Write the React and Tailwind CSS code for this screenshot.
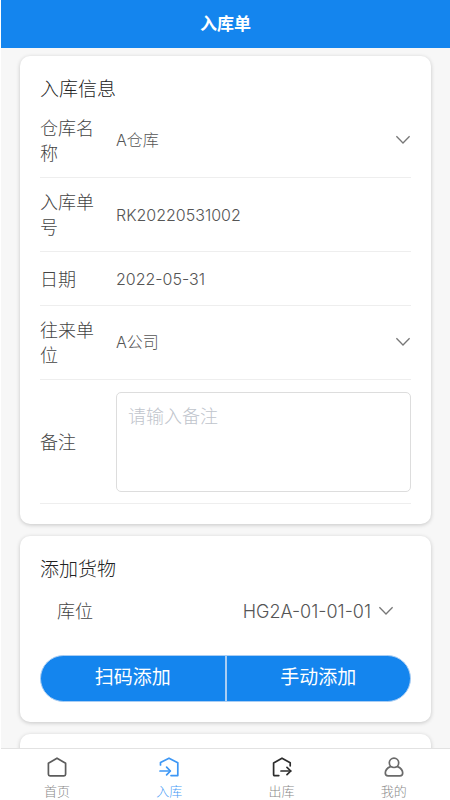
import { useState } from 'react';

const TABS = [
  { id: 'home', label: '首页', color: 'text-[#8a8a8a]', iconColor: 'text-[#5c5c5c]' },
  { id: 'in', label: '入库', color: 'text-[#4a9df5]', iconColor: 'text-[#3d97f5]' },
  { id: 'out', label: '出库', color: 'text-[#8a8a8a]', iconColor: 'text-[#2c2c2c]' },
  { id: 'me', label: '我的', color: 'text-[#8a8a8a]', iconColor: 'text-[#6a6a6a]' },
];

const TAB_PATHS = {
  home: ['M10 1.2 18.6 6.2V17.2Q18.6 18.8 17 18.8H3Q1.4 18.8 1.4 17.2V6.2Z'],
  in: ['M1.5 8V5.6L10 1.2 18.8 5.8V18.6H12', 'M1 14H11', 'M7.6 10.2 11.4 14 7.6 17.8'],
  out: ['M6.8 18.6H2.6Q1.6 18.6 1.6 17.6V6L10 1.2 18.2 5.8V8.8', 'M9 14H18.6', 'M15 10.4 18.8 14 15 17.6'],
  me: [
    'M10 1.1A4.7 4.7 0 1 1 10 10.5A4.7 4.7 0 1 1 10 1.1Z',
    'M6.5 9.6C3.4 10.9 1.3 13.4 1.3 16Q1.3 18.8 4.1 18.8H15.9Q18.7 18.8 18.7 16C18.7 13.4 16.6 10.9 13.5 9.6',
  ],
};

function TabIcon({ id, className }) {
  return (
    <svg
      viewBox="0 0 20 20"
      className={`size-5 ${className}`}
      fill="none"
      stroke="currentColor"
      strokeWidth="1.7"
      strokeLinecap="round"
      strokeLinejoin="round"
      aria-hidden="true"
    >
      {TAB_PATHS[id].map((d) => (
        <path key={d} d={d} />
      ))}
    </svg>
  );
}

function Chevron() {
  return (
    <svg
      viewBox="0 0 16 12"
      className="pointer-events-none h-3 w-4 shrink-0 text-[#777]"
      fill="none"
      stroke="currentColor"
      strokeWidth="1.3"
      aria-hidden="true"
    >
      <path d="M1.4 1.2 8 8 14.6 1.2" />
    </svg>
  );
}

function Card({ title, children }) {
  return (
    <section className="rounded-[10px] bg-white p-5 shadow-[0_1px_4px_rgba(0,0,0,0.2)]">
      {title ? <h2 className="h-7 text-[19px] leading-7 text-[#222]">{title}</h2> : null}
      {children}
    </section>
  );
}

function Row({ id, label, children }) {
  return (
    <div className="flex min-h-[54px] items-center border-b border-[#eee] pt-3 pb-[11px]">
      <label htmlFor={id} className="w-[76px] shrink-0 pr-4 text-[18px] leading-[25px] text-[#444]">
        {label}
      </label>
      <div className="flex min-w-0 flex-1 items-center">{children}</div>
    </div>
  );
}

const FIELD = 'h-6 min-w-0 flex-1 appearance-none bg-transparent text-[16px] leading-6 text-[#555] outline-none';
const SELECT = 'h-6 min-w-0 flex-1 appearance-none bg-transparent pb-0.5 text-[16px] leading-5 text-[#555] outline-none';

export default function App() {
  const [tab, setTab] = useState('in');

  return (
    <div className="flex h-screen flex-col bg-white pl-px font-[Inter,'Noto_Sans_CJK_SC',sans-serif] font-light">
      <header className="flex h-12 shrink-0 items-center justify-center bg-[#1485ee] pt-0.5">
        <h1 className="text-[17px] font-bold text-white">入库单</h1>
      </header>

      <main className="flex min-h-0 flex-1 flex-col gap-3 overflow-y-auto bg-[#f7f7f7] px-[19px] pt-2 [scrollbar-width:none]">
        <Card title="入库信息">
          <Row id="warehouse" label="仓库名称">
            <select id="warehouse" className={SELECT}>
              <option>A仓库</option>
            </select>
            <Chevron />
          </Row>
          <Row id="order-no" label="入库单号">
            <input id="order-no" className={FIELD} defaultValue="RK20220531002" />
          </Row>
          <Row id="date" label="日期">
            <input id="date" className={FIELD} defaultValue="2022-05-31" />
          </Row>
          <Row id="partner" label="往来单位">
            <select id="partner" className={SELECT}>
              <option>A公司</option>
            </select>
            <Chevron />
          </Row>
          <Row id="remark" label="备注">
            <textarea
              id="remark"
              placeholder="请输入备注"
              className="h-[100px] w-full resize-none rounded-[5px] border border-[#ddd] px-[11px] py-3 text-[18px] leading-6 text-[#555] outline-none placeholder:text-[#c0c4cc]"
            />
          </Row>
        </Card>

        <Card title="添加货物">
          <div className="flex h-[55px] items-center px-[17px]">
            <label htmlFor="location" className="text-[18px] leading-[25px] text-[#444]">
              库位
            </label>
            <select
              id="location"
              className="mr-[7px] ml-auto appearance-none bg-transparent text-right text-[18px] leading-6 text-[#555] outline-none"
            >
              <option>HG2A-01-01-01</option>
            </select>
            <Chevron />
          </div>
          <div className="mt-4 flex h-[47px] divide-x-2 divide-[#a9cdf3] overflow-hidden rounded-full border border-[#a9cdf3] bg-[#1485ee] text-[19px] font-normal text-white">
            <button type="button" className="flex-1">
              扫码添加
            </button>
            <button type="button" className="flex-1">
              手动添加
            </button>
          </div>
        </Card>

        <Card>
          <div className="h-24" />
        </Card>
      </main>

      <nav className="grid h-[52px] shrink-0 grid-cols-4 border-t border-[#e2e2e2] bg-white">
        {TABS.map((t) => (
          <button
            key={t.id}
            type="button"
            aria-current={tab === t.id ? 'page' : undefined}
            onClick={() => setTab(t.id)}
            className={`flex flex-col items-center gap-[5px] pt-2 text-[13px] leading-[18px] ${t.color}`}
          >
            <TabIcon id={t.id} className={t.iconColor} />
            {t.label}
          </button>
        ))}
      </nav>
    </div>
  );
}
